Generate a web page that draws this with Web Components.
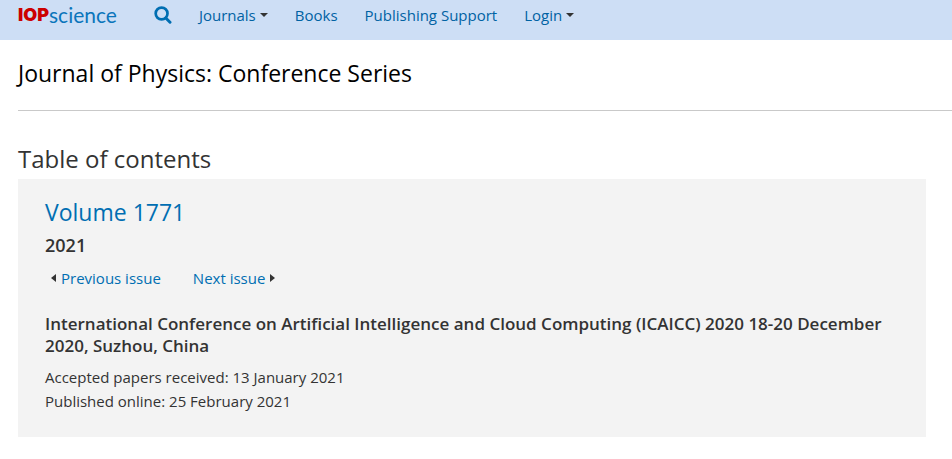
<!DOCTYPE html>
<html lang="en">
<head>
<meta charset="utf-8">
<title>Journal of Physics: Conference Series, Volume 1771 - IOPscience</title>
<style>
body { margin: 0; background: #fff; color: #333; font: 15px/24px "Open Sans", "Noto Sans", sans-serif; }
</style>
</head>
<body>
<site-header></site-header>
<journal-title>Journal of Physics: Conference Series</journal-title>
<issue-contents></issue-contents>

<template id="site-header">
<style>
:host { display: block; background: #cddef5; }
header { display: flex; align-items: center; padding: 3px 18px 13px; }
nav { display: flex; align-items: center; gap: 27px; }
</style>
<header>
  <iop-logo></iop-logo>
  <nav aria-label="Main">
    <search-button></search-button>
    <nav-item menu>Journals</nav-item>
    <nav-item>Books</nav-item>
    <nav-item>Publishing Support</nav-item>
    <nav-item menu>Login</nav-item>
  </nav>
</header>
</template>

<template id="iop-logo">
<style>
:host { display: block; margin-right: 37px; }
a { display: flex; align-items: center; text-decoration: none; color: #0a75bb; font: 21px/24px Lato, "Liberation Sans", sans-serif; }
b { color: #c00; font: 900 18px/24px Inter, sans-serif; }
</style>
<a href="#" aria-label="IOPscience"><b>IOP</b><span>science</span></a>
</template>

<template id="search-button">
<style>
:host { display: block; }
button { display: block; border: 0; padding: 0; background: none; color: #006eb2; }
svg { display: block; }
</style>
<button aria-label="Search"><svg width="18" height="18" viewBox="0 0 18 18" fill="none" stroke="currentColor"><circle cx="7.6" cy="7.5" r="5.9" stroke-width="2.7"/><path d="M11.8 12 16 16.2" stroke-width="3" stroke-linecap="round"/></svg></button>
</template>

<template id="nav-item">
<style>
:host { display: block; }
a { display: flex; align-items: center; gap: 4px; color: #0062a3; text-decoration: none; }
svg { display: none; }
:host([menu]) svg { display: block; }
</style>
<a href="#"><slot></slot><svg width="8" height="4" viewBox="0 0 8 4" fill="#333"><path d="M0 0h8L4 4z"/></svg></a>
</template>

<template id="journal-title">
<style>
:host { display: block; margin-left: 18px; border-bottom: 1px solid #c9c9c9; color: #000; }
h1 { margin: 0; padding: 17px 0 21px; font-weight: 400; font-size: 23px; line-height: 32px; }
</style>
<h1><slot></slot></h1>
</template>

<template id="issue-contents">
<style>
:host { display: block; padding: 32px 26px 22px 18px; }
h2 { margin: 0; font-weight: 400; font-size: 24px; line-height: 32px; padding-bottom: 4px; }
</style>
<h2>Table of contents</h2>
<issue-panel></issue-panel>
</template>

<template id="issue-panel">
<style>
:host { display: block; background: #f3f3f3; padding: 16px 27px 24px; }
a { color: #006eb2; text-decoration: none; }
h3, h4, p { margin: 0; }
h3 { font-weight: 400; font-size: 23px; line-height: 34px; }
.year { font-weight: 600; font-size: 18px; line-height: 32px; }
nav { display: flex; gap: 32px; padding: 5px 6px 21px; }
nav a { display: flex; align-items: center; gap: 5px; }
h4 { font-weight: 600; font-size: 17px; line-height: 22px; padding: 2px 0 8px; }
</style>
<h3><a href="#">Volume 1771</a></h3>
<p class="year">2021</p>
<nav aria-label="Issues">
  <a href="#"><svg width="5" height="8" viewBox="0 0 5 8" fill="#333"><path d="M5 0v8L0 4z"/></svg>Previous issue</a>
  <a href="#">Next issue<svg width="5" height="8" viewBox="0 0 5 8" fill="#333"><path d="M0 0v8l5-4z"/></svg></a>
</nav>
<h4>International Conference on Artificial Intelligence and Cloud Computing (ICAICC) 2020 18-20 December 2020, Suzhou, China</h4>
<p>Accepted papers received: 13 January 2021</p>
<p>Published online: 25 February 2021</p>
</template>

<script>
for (const name of ["iop-logo", "search-button", "nav-item", "site-header", "journal-title", "issue-panel", "issue-contents"]) {
  customElements.define(name, class extends HTMLElement {
    constructor() {
      super();
      this.attachShadow({ mode: "open" }).append(document.getElementById(name).content.cloneNode(true));
    }
  });
}
</script>
</body>
</html>
